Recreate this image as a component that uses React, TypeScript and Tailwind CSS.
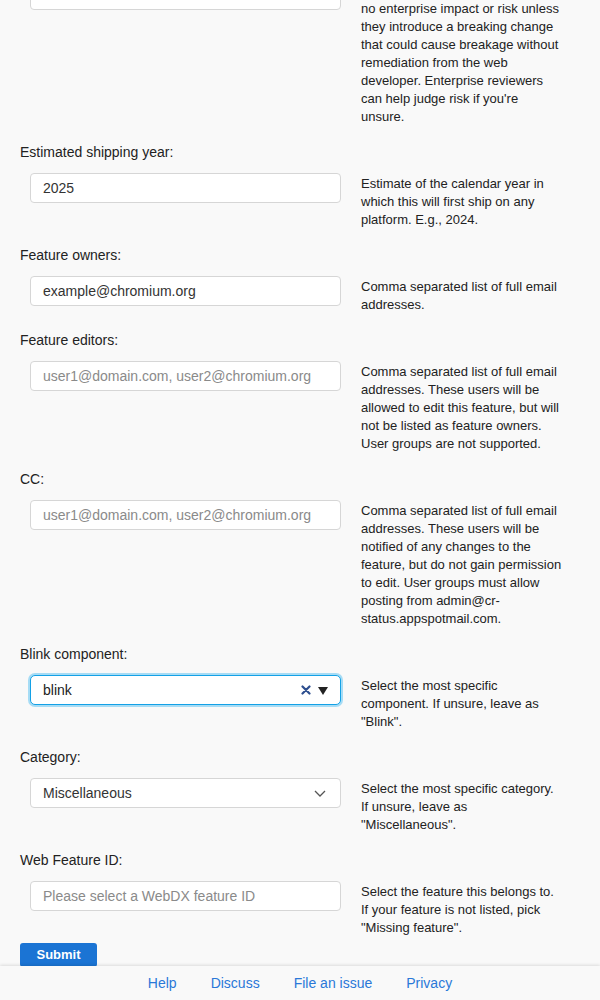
import React from 'react';

const inputBase =
  'ml-[10px] h-[30px] w-[311px] shrink-0 overflow-hidden whitespace-nowrap rounded-[4px] border border-[#d6d6d6] bg-white px-3 flex items-center text-[14px] text-[#333]';

function Help({ children }: { children: React.ReactNode }) {
  return <div className="w-[202px] pt-[2px] text-[13px] leading-[18px] text-[#222]">{children}</div>;
}

function Row({ control, help }: { control: React.ReactNode; help: React.ReactNode }) {
  return (
    <div className="mt-3 flex items-start gap-5">
      {control}
      <Help>{help}</Help>
    </div>
  );
}

function Label({ children }: { children: React.ReactNode }) {
  return <div className="pt-[17px] text-[14px] leading-[18px] text-[#222]">{children}</div>;
}

function TextBox({ value, placeholder }: { value?: string; placeholder?: string }) {
  return (
    <div className={inputBase}>
      {value ? <span>{value}</span> : <span className="text-[#8a8a8a]">{placeholder}</span>}
    </div>
  );
}

export default function App() {
  return (
    <div className="min-h-screen bg-[#f9f9f9] font-['Liberation_Sans',Arial,sans-serif]">
      <div className="px-5">
        {/* field scrolled off the top */}
        <div className="-mt-[20px] flex items-start gap-5">
          <div className={inputBase} />
          <Help>
            Features behind a flag have
            <br />
            no enterprise impact or risk unless they introduce a breaking change that could cause breakage
            without remediation from the web developer. Enterprise reviewers can help judge risk if you're
            unsure.
          </Help>
        </div>

        <Label>Estimated shipping year:</Label>
        <Row
          control={<TextBox value="2025" />}
          help="Estimate of the calendar year in which this will first ship on any platform. E.g., 2024."
        />

        <Label>Feature owners:</Label>
        <Row control={<TextBox value="example@chromium.org" />} help="Comma separated list of full email addresses." />

        <Label>Feature editors:</Label>
        <Row
          control={<TextBox placeholder="user1@domain.com, user2@chromium.org" />}
          help="Comma separated list of full email addresses. These users will be allowed to edit this feature, but will not be listed as feature owners. User groups are not supported."
        />

        <Label>CC:</Label>
        <Row
          control={<TextBox placeholder="user1@domain.com, user2@chromium.org" />}
          help="Comma separated list of full email addresses. These users will be notified of any changes to the feature, but do not gain permission to edit. User groups must allow posting from admin@cr-status.appspotmail.com."
        />

        <Label>Blink component:</Label>
        <Row
          control={
            <div className="ml-[10px] h-[30px] w-[311px] shrink-0 rounded-[5px] border border-[#14a1e6] bg-white pl-3 pr-[12px] flex items-center text-[14px] text-[#222] shadow-[0_0_0_2px_#a6dcf5]">
              <span className="flex-1">blink</span>
              <svg width="10" height="10" viewBox="0 0 10 10" className="mr-[7px]">
                <path d="M1.5 1.5 L8.5 8.5 M8.5 1.5 L1.5 8.5" stroke="#2e4f8f" strokeWidth="2.2" strokeLinecap="round" />
              </svg>
              <svg width="10" height="9" viewBox="0 0 10 9">
                <path d="M0 1 L10 1 L5 9 Z" fill="#222" />
              </svg>
            </div>
          }
          help={'Select the most specific component. If unsure, leave as "Blink".'}
        />

        <Label>Category:</Label>
        <Row
          control={
            <div className={inputBase + ' justify-between pr-[14px]'}>
              <span>Miscellaneous</span>
              <svg width="12" height="7" viewBox="0 0 12 7">
                <path d="M1 1 L6 6 L11 1" stroke="#555" strokeWidth="1.3" fill="none" />
              </svg>
            </div>
          }
          help={'Select the most specific category. If unsure, leave as "Miscellaneous".'}
        />

        <Label>Web Feature ID:</Label>
        <Row
          control={<TextBox placeholder="Please select a WebDX feature ID" />}
          help={'Select the feature this belongs to. If your feature is not listed, pick "Missing feature".'}
        />

        <button className="mt-[6px] h-[24px] w-[77px] rounded-[3px] bg-[#1b74d4] text-[13px] font-bold text-white">
          Submit
        </button>
      </div>

      <footer className="relative -mt-px flex h-[34px] items-center justify-center gap-[34px] bg-[#f9f9f9] text-[14px] text-[#2a78d8] shadow-[0_-1px_3px_rgba(0,0,0,0.12)]">
        <a>Help</a>
        <a>Discuss</a>
        <a>File an issue</a>
        <a>Privacy</a>
      </footer>
    </div>
  );
}
